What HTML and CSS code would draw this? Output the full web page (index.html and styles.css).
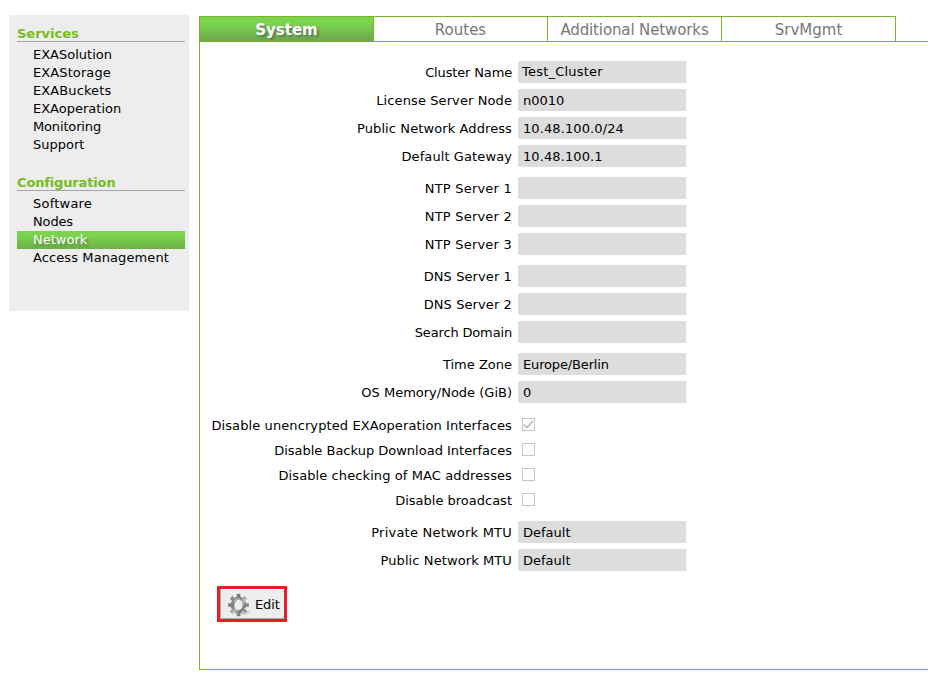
FILE: index.html
```html
<!DOCTYPE html>
<html lang="en">
<head>
<meta charset="utf-8">
<title>Network</title>
<link rel="stylesheet" href="styles.css">
</head>
<body>
<div class="page">
  <nav class="sidebar">
    <h2>Services</h2>
    <ul>
      <li>EXASolution</li>
      <li class="loose">EXAStorage</li>
      <li class="loose">EXABuckets</li>
      <li>EXAoperation</li>
      <li class="tight">Monitoring</li>
      <li>Support</li>
    </ul>
    <h2 class="tight">Configuration</h2>
    <ul>
      <li class="wide">Software</li>
      <li class="tight">Nodes</li>
      <li class="current">Network</li>
      <li class="loose">Access Management</li>
    </ul>
  </nav>
  <main class="panel">
    <div class="tabs">
      <div class="tab active">System</div>
      <div class="tab">Routes</div>
      <div class="tab additional">Additional Networks</div>
      <div class="tab">SrvMgmt</div>
    </div>
    <div class="form">
      <div class="group">
        <div class="row"><span class="label tight">Cluster Name</span><span class="value raised wide">Test_Cluster</span></div>
        <div class="row"><span class="label loose">License Server Node</span><span class="value">n0010</span></div>
        <div class="row"><span class="label loose">Public Network Address</span><span class="value loose">10.48.100.0/24</span></div>
        <div class="row"><span class="label loose">Default Gateway</span><span class="value loose">10.48.100.1</span></div>
      </div>
      <div class="group">
        <div class="row"><span class="label wide">NTP Server 1</span><span class="value"></span></div>
        <div class="row"><span class="label wide">NTP Server 2</span><span class="value"></span></div>
        <div class="row"><span class="label wide">NTP Server 3</span><span class="value"></span></div>
      </div>
      <div class="group">
        <div class="row"><span class="label loose">DNS Server 1</span><span class="value"></span></div>
        <div class="row"><span class="label loose">DNS Server 2</span><span class="value"></span></div>
        <div class="row"><span class="label tight">Search Domain</span><span class="value"></span></div>
      </div>
      <div class="group">
        <div class="row"><span class="label">Time Zone</span><span class="value tight">Europe/Berlin</span></div>
        <div class="row"><span class="label">OS Memory/Node (GiB)</span><span class="value">0</span></div>
      </div>
      <div class="group checks">
        <div class="row"><span class="label loose">Disable unencrypted EXAoperation Interfaces</span><span class="check"><svg viewBox="0 0 11 11"><path d="M1 5.5 4 8.5 10 2" fill="none" stroke="#b9b9b9" stroke-width="1.7"/></svg></span></div>
        <div class="row"><span class="label">Disable Backup Download Interfaces</span><span class="check"></span></div>
        <div class="row"><span class="label loose">Disable checking of MAC addresses</span><span class="check"></span></div>
        <div class="row"><span class="label">Disable broadcast</span><span class="check"></span></div>
      </div>
      <div class="group">
        <div class="row"><span class="label wide">Private Network MTU</span><span class="value">Default</span></div>
        <div class="row"><span class="label loose">Public Network MTU</span><span class="value">Default</span></div>
      </div>
    </div>
    <button class="edit" type="button">
      <svg class="gear" viewBox="0 0 24 24">
        <defs>
          <linearGradient id="metal" x1="0" y1="0" x2="1" y2="1">
            <stop offset="0" stop-color="#999"/>
            <stop offset=".3" stop-color="#777"/>
            <stop offset=".55" stop-color="#bbb"/>
            <stop offset=".8" stop-color="#777"/>
            <stop offset="1" stop-color="#aaa"/>
          </linearGradient>
        </defs>
        <ellipse cx="15" cy="19" rx="8" ry="3" fill="#d2d2d2"/>
        <g fill="none" stroke="url(#metal)">
          <ellipse cx="11.5" cy="12" rx="6" ry="7" stroke-width="3.6"/>
          <ellipse cx="11.5" cy="12" rx="8.7" ry="9.6" stroke-width="3.2" pathLength="80" stroke-dasharray="5 5" stroke-dashoffset="2.5"/>
        </g>
        <path d="M7 8.5C8.2 6 11 5.5 13 6.2" fill="none" stroke="#d8d8d8"/>
        <path d="M15 18l5 3M17 15l3 3" stroke="#ddd"/>
      </svg>
      <span>Edit</span>
    </button>
  </main>
</div>
</body>
</html>
```
FILE: styles.css
```css
* { box-sizing: border-box; }

body {
  margin: 0;
  background: #fff;
  color: #000;
  font: 13px/18px Verdana, "DejaVu Sans", sans-serif;
  overflow: hidden;
}

.tight { letter-spacing: -0.15px; }
.loose { letter-spacing: 0.1px; }
.wide { letter-spacing: 0.22px; }

.page {
  display: flex;
  align-items: flex-start;
  gap: 10px;
  padding: 15px 0 0 9px;
}

.sidebar {
  flex: none;
  width: 180px;
  height: 296px;
  padding: 10px 4px 0 8px;
  background: #ededed;
}

.sidebar h2 {
  height: 17px;
  margin: 0 0 4px;
  border-bottom: 1px solid #a6a6a6;
  color: #76bc21;
  font-size: 13px;
  line-height: 17px;
}

.sidebar ul {
  margin: 0 0 20px;
  padding: 0;
  list-style: none;
}

.sidebar li {
  height: 18px;
  padding-left: 16px;
}

.sidebar .current {
  background: linear-gradient(#7bd34e 25%, #6cae48);
  color: #fff;
  text-shadow: 2px 2px 2px #5d8d48;
}

.panel {
  flex: 1;
  height: 654px;
  margin-top: 1px;
  border: solid #76b82a;
  border-width: 0 0 1px 1px;
}

.tabs {
  display: flex;
  height: 26px;
  border-bottom: 1px solid #76b82a;
}

.tab {
  width: 174px;
  height: 25px;
  border: solid #76b82a;
  border-width: 1px 1px 0 0;
  color: #777;
  font-size: 15px;
  line-height: 26px;
  text-align: center;
}

.tab.additional { letter-spacing: -0.12px; }

.tab.active {
  background: linear-gradient(#7bd34e 30%, #6ca54b);
  color: #fff;
  font-weight: bold;
  text-shadow: 2px 2px 2px #5d7d58;
}

.form { padding-top: 19px; }

.group { margin-bottom: 4px; }

.row {
  display: flex;
  height: 28px;
}

.label {
  width: 312px;
  margin-right: 6px;
  line-height: 23px;
  text-align: right;
  white-space: nowrap;
}

.value {
  width: 168px;
  height: 22px;
  padding-left: 5px;
  background: #ddd;
  line-height: 23px;
}

.value.raised {
  padding-left: 4px;
  line-height: 21px;
}

.checks {
  padding-top: 1px;
  margin-bottom: 7px;
}

.checks .row { height: 25px; }

.check {
  width: 13px;
  height: 13px;
  margin: 4px 0 0 4px;
  border: 1px solid #c6c6c6;
}

.check svg { display: block; }

.edit {
  display: flex;
  align-items: center;
  gap: 4px;
  width: 70px;
  height: 36px;
  margin: 9px 0 0 17px;
  padding: 1px 0 0 7px;
  border: 3px solid #ed1c24;
  background: #ededed;
  box-shadow: inset 1px 0 #aaa, inset 0 -1px #aaa, inset 0 1px #fff;
  color: #000;
  font: inherit;
  letter-spacing: -0.15px;
}

.gear {
  width: 24px;
  height: 24px;
}
```
